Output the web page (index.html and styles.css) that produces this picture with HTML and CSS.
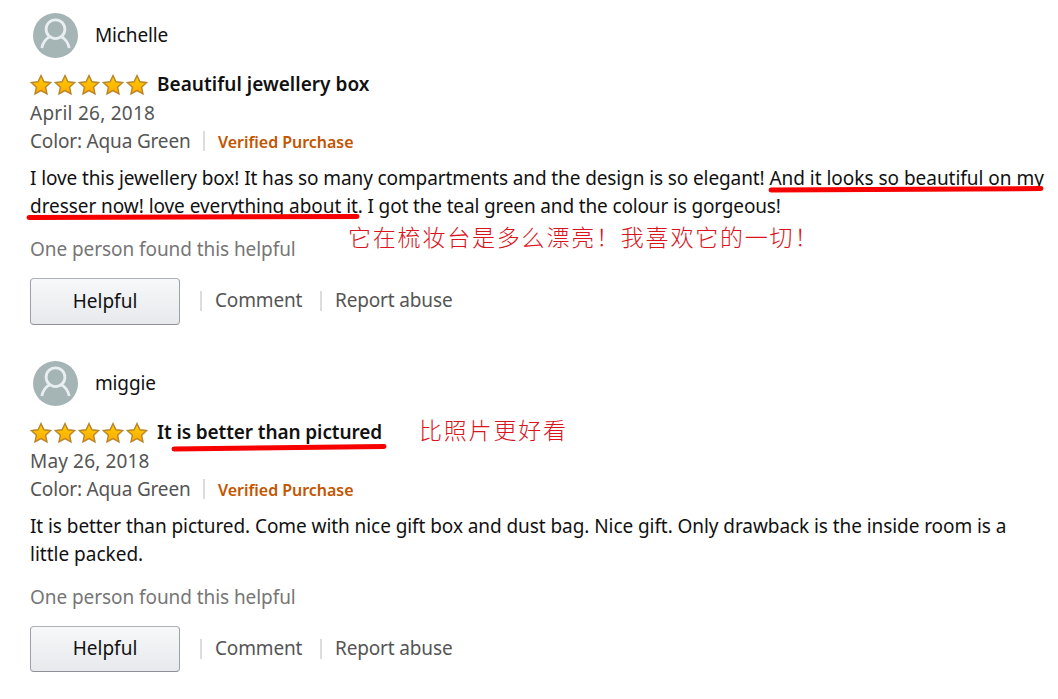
FILE: index.html
```
<!DOCTYPE html>
<html lang="en">
<head>
   <meta charset="UTF-8">
   <title>Customer reviews</title>
   <link rel="stylesheet" href="styles.css">
</head>
<body>
   <svg class="defs" width="0" height="0">
      <defs>
         <linearGradient id="gold" x1="0" y1="0" x2="0" y2="1">
            <stop offset="0" stop-color="#ffd000"/>
            <stop offset="1" stop-color="#ffa800"/>
         </linearGradient>
         <symbol id="star" viewBox="0 0 24 22">
            <path d="M11 1.600l2.900 6.200 6.700.8-5 4.600 1.400 6.700-6-3.300-6 3.300 1.400-6.700L1.400 8.600l6.700-.8z" fill="url(#gold)" stroke="#b98528" stroke-width="1.4"/>
         </symbol>
         <symbol id="person" viewBox="0 0 45 45">
            <circle cx="22.5" cy="22.5" r="22.5" fill="#a5b4b4"/>
            <circle cx="22.5" cy="16.2" r="9.4" fill="none" stroke="#e9eef2" stroke-width="2.8"/>
            <path d="M8.800 35c1.200-5.500 4.200-9.500 8.200-11.500M36.200 35c-1.200-5.500-4.200-9.500-8.200-11.500" fill="none" stroke="#e9eef2" stroke-width="2.8"/>
         </symbol>
      </defs>
   </svg>

   <div class="review">
      <div class="profile">
         <svg class="avatar"><use href="#person"/></svg>
         <span class="name">Michelle</span>
      </div>
      <div class="heading">
         <span class="stars">
            <svg><use href="#star"/></svg><svg><use href="#star"/></svg><svg><use href="#star"/></svg><svg><use href="#star"/></svg><svg><use href="#star"/></svg>
         </span>
         <b class="title title-a">Beautiful jewellery box</b>
      </div>
      <p class="date">April 26, 2018</p>
      <div class="format">
         <span class="color">Color: Aqua Green</span>
         <span class="verified">Verified Purchase</span>
      </div>
      <div class="text">
         <p class="l1">I love this jewellery box! It has so many compartments and the design is so elegant! <span class="marked">And it looks so beautiful on my<svg class="mark" viewBox="0 0 276 8" preserveAspectRatio="none"><path d="M3 5L273 3.500"/></svg></span></p>
         <p class="l2"><span class="marked">dresser now! love everything about it<svg class="mark mark-b" viewBox="0 0 334 8" preserveAspectRatio="none"><path d="M3 4.500L331 3.500"/></svg></span>. I got the teal green and the colour is gorgeous!</p>
      </div>
      <p class="note note-a" lang="zh">它在梳妆台是多么漂亮！我喜欢它的一切！</p>
      <p class="count">One person found this helpful</p>
      <div class="actions">
         <button class="helpful">Helpful</button>
         <a class="comment">Comment</a>
         <a class="report">Report abuse</a>
      </div>
   </div>

   <div class="review">
      <div class="profile">
         <svg class="avatar"><use href="#person"/></svg>
         <span class="name">miggie</span>
      </div>
      <div class="heading">
         <span class="stars">
            <svg><use href="#star"/></svg><svg><use href="#star"/></svg><svg><use href="#star"/></svg><svg><use href="#star"/></svg><svg><use href="#star"/></svg>
         </span>
         <b class="title title-b">It <span class="marked">is better than pictured<svg class="mark mark-c" viewBox="0 0 216 9" preserveAspectRatio="none"><path d="M3 6L213 3.500"/></svg></span></b>
      </div>
      <p class="note note-b" lang="zh">比照片更好看</p>
      <p class="date may">May 26, 2018</p>
      <div class="format">
         <span class="color">Color: Aqua Green</span>
         <span class="verified">Verified Purchase</span>
      </div>
      <div class="text">
         <p class="l3">It is better than pictured. Come with nice gift box and dust bag. Nice gift. Only drawback is the inside room is a</p>
         <p class="l4">little packed.</p>
      </div>
      <p class="count">One person found this helpful</p>
      <div class="actions">
         <button class="helpful short">Helpful</button>
         <a class="comment">Comment</a>
         <a class="report">Report abuse</a>
      </div>
   </div>
</body>
</html>
```

FILE: styles.css
```
body {
   margin: 0;
   background: white;
   color: #111;
   font-family: "Noto Sans", "Noto Sans CJK SC", sans-serif;
   font-size: 19px;
   line-height: 28px;
   white-space: nowrap;
   overflow: hidden;
}
p {
   margin: 0;
}
.defs {
   position: absolute;
}
.review {
   position: relative;
   box-sizing: border-box;
   height: 348px;
   padding: 13px 0 0 30px;
}
.profile {
   display: flex;
   align-items: center;
   height: 45px;
   margin-left: 3px;
}
.avatar {
   width: 45px;
   height: 45px;
   margin-right: 17px;
}
.name {
   padding-bottom: 2px;
   letter-spacing: -0.15px;
}
.heading {
   display: flex;
   height: 28px;
   margin-top: 12px;
}
.stars {
   display: flex;
   width: 127px;
   padding-top: 4px;
}
.stars svg {
   width: 24px;
   height: 22px;
}
.title {
   font-weight: 600;
}
.title-a {
   letter-spacing: 0.03px;
}
.title-b {
   letter-spacing: -0.1px;
}
.date, .color {
   color: #555;
}
.date {
   margin-top: 1px;
   letter-spacing: 0.25px;
}
.may {
   letter-spacing: 0.15px;
}
.format {
   display: flex;
   height: 28px;
}
.color {
   width: 160px;
   letter-spacing: -0.17px;
}
.verified {
   margin-left: 13px;
   padding: 1px 0 0 15px;
   font-size: 16px;
   font-weight: 600;
   color: #c45500;
   letter-spacing: -0.04px;
   background: linear-gradient(#ddd, #ddd) 0 4px / 2px 20px no-repeat;
}
.text {
   margin-top: 9px;
}
.l1 {
   letter-spacing: -0.107px;
}
.l2 {
   letter-spacing: -0.15px;
}
.l3 {
   letter-spacing: -0.07px;
}
.marked {
   position: relative;
}
.l1 .marked {
   letter-spacing: -0.02px;
}
.l2 .marked {
   letter-spacing: -0.06px;
}
/* red pen strokes */
.mark {
   position: absolute;
   left: -1px;
   top: 20px;
   width: 276px;
   height: 8px;
   fill: none;
   stroke: #f60000;
   stroke-width: 5;
   stroke-linecap: round;
}
.mark-b {
   left: -4px;
   width: 334px;
}
.mark-c {
   left: -5px;
   top: 24px;
   width: 216px;
   height: 9px;
}
.note {
   position: absolute;
   color: #d9141c;
   font-family: "Noto Sans CJK SC", sans-serif;
   font-weight: 300;
   font-size: 23px;
   letter-spacing: 1.8px;
}
.note-a {
   left: 348px;
   top: 222px;
}
.note-b {
   left: 419px;
   top: 67px;
}
.count {
   margin-top: 15px;
   color: #767676;
   letter-spacing: -0.07px;
}
.actions {
   display: flex;
   align-items: center;
   margin-top: 15px;
   color: #555;
}
.helpful {
   width: 150px;
   height: 47px;
   padding: 0 0 2px;
   border: 1px solid #a2a6ac;
   border-color: #adb1b8 #9ca0a8 #8d9096;
   border-radius: 4px;
   background: linear-gradient(#f7f8fa, #e7e9ec);
   font: inherit;
   color: #111;
}
.short {
   height: 46px;
}
.comment, .report {
   padding: 0 0 3px 15px;
   letter-spacing: -0.15px;
   background: linear-gradient(#ddd, #ddd) 0 5px / 2px 20px no-repeat;
}
.comment {
   width: 105px;
   margin-left: 20px;
}
```
